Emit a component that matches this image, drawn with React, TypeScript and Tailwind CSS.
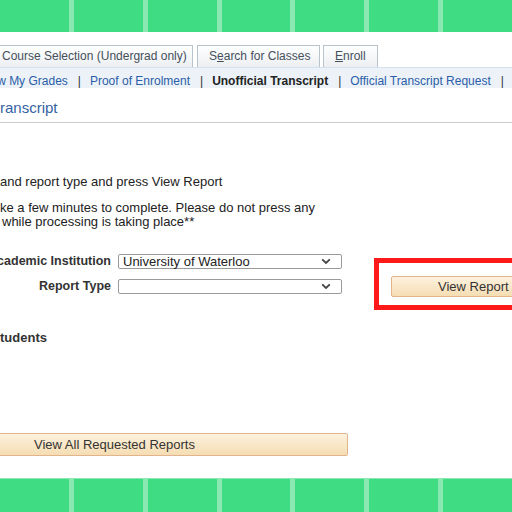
import React from "react";

function Band({ top }: { top?: boolean }) {
    return (
        <div className={"flex gap-[5px] bg-[#8ae8b2] shrink-0 " + (top ? "h-[32px]" : "h-[34px] pt-[1px]")}>
            {[0, 1, 2, 3, 4, 5, 6].map(i => <div key={i} className="flex-1 bg-[#40dc84]"></div>)}
        </div>
    )
}

function Chevron() {
    return (
        <svg width="10" height="7" viewBox="0 0 10 7" className="shrink-0">
            <path d="M1.2 1.3 L5 5 L8.8 1.3" fill="none" stroke="#444" strokeWidth="1.8" />
        </svg>
    )
}

function Select({ value }: { value?: string }) {
    return (
        <div className="w-[224px] h-[15px] border border-[#9a9a9a] rounded-[2px] bg-white flex items-center pl-[4px] pr-[10px] text-[13px] leading-[13px] text-[#222]">
            <span className="flex-1 whitespace-nowrap">{value}</span>
            <Chevron />
        </div>
    )
}

export default function App() {
    return (
        <div className="w-[512px] h-[512px] overflow-hidden bg-white flex flex-col font-['Liberation_Sans',Arial,sans-serif]">
            <Band top />

            <main className="flex-1 flex flex-col">
                {/* tabs */}
                <div className="mt-[13px] h-[22px] flex items-end gap-[4px] shrink-0">
                    <div className="-ml-[4px] w-[197px] h-[22px] border border-b-0 border-[#b9c3cc] bg-gradient-to-b from-white to-[#eceff2] pl-[5px] text-[12px] leading-[21px] text-[#46505c] whitespace-nowrap">Course Selection (Undergrad only)</div>
                    <div className="w-[123px] h-[22px] border border-b-0 border-[#b9c3cc] bg-gradient-to-b from-white to-[#eceff2] pl-[11px] text-[12px] leading-[21px] text-[#46505c] whitespace-nowrap">S<u>e</u>arch for Classes</div>
                    <div className="-ml-[1px] w-[55px] h-[22px] border border-b-0 border-[#b9c3cc] bg-gradient-to-b from-white to-[#eceff2] pl-[11px] text-[12px] leading-[21px] text-[#46505c] whitespace-nowrap"><u>E</u>nroll</div>
                </div>

                {/* links */}
                <div className="h-[21px] bg-[#edf2f8] border-t border-[#d6e0ec] pt-[6px] text-[12px] leading-[14px] whitespace-nowrap flex shrink-0">
                    <span className="-ml-[20px] text-[#2a5ea8]">View My Grades</span>
                    <span className="ml-[10px] mr-[9px] text-[#333]">|</span>
                    <span className="text-[#2a5ea8]">Proof of Enrolment</span>
                    <span className="ml-[10px] mr-[9px] text-[#333]">|</span>
                    <span className="font-bold text-[#222]">Unofficial Transcript</span>
                    <span className="ml-[10px] mr-[9px] text-[#333]">|</span>
                    <span className="text-[#2a5ea8]">Official Transcript Request</span>
                    <span className="ml-[10px] mr-[9px] text-[#333]">|</span>
                    <span className="text-[#2a5ea8]">Transcript Request</span>
                </div>

                {/* heading */}
                <div className="pt-[11px] pb-[5px] border-b border-[#cacaca] shrink-0">
                    <h1 className="text-[15px] leading-[18px] text-[#3563a3]">ranscript</h1>
                </div>

                {/* instructions */}
                <div className="mt-[52px] text-[13px] leading-[14px] text-[#222] whitespace-nowrap">
                    <p>and report type and press View Report</p>
                    <p className="mt-[12px]">ke a few minutes to complete. Please do not press any</p>
                    <p className="pl-[2px]">while processing is taking place**</p>
                </div>

                {/* form */}
                <div className="mt-[23px] flex items-start shrink-0">
                    <div className="flex flex-col gap-[6px]">
                        <div className="flex items-center gap-[7px]">
                            <div className="w-[111px] flex justify-end">
                                <span className="shrink-0 whitespace-nowrap text-[12.5px] font-bold text-[#333]">Academic Institution</span>
                            </div>
                            <Select value="University of Waterloo" />
                        </div>
                        <div className="flex items-center gap-[7px]">
                            <div className="w-[111px] flex justify-end">
                                <span className="shrink-0 whitespace-nowrap text-[12.5px] font-bold text-[#333]">Report Type</span>
                            </div>
                            <Select />
                        </div>
                    </div>

                    <div className="ml-[32px] mt-[6px] w-[160px] h-[52px] shrink-0 border-[5px] border-[#ff1a1a] pl-[12px] pt-[13px]">
                        <div className="w-[160px] h-[21px] border border-[#e2b48e] rounded-[2px] bg-gradient-to-b from-[#fdf2de] to-[#f5ddb3] pl-[46px] text-[13px] leading-[19px] text-[#333] whitespace-nowrap">View Report</div>
                    </div>
                </div>

                <p className="mt-[21px] text-[13px] leading-[14px] font-bold text-[#333] whitespace-nowrap">tudents</p>

                <div className="mt-[88px] w-[348px] h-[23px] border border-[#e2b48e] border-l-0 rounded-r-[2px] bg-gradient-to-b from-[#fdf2de] to-[#f5ddb3] pl-[34px] text-[13px] leading-[21px] text-[#333] whitespace-nowrap shrink-0">View All Requested Reports</div>
            </main>

            <Band />
        </div>
    )
}
